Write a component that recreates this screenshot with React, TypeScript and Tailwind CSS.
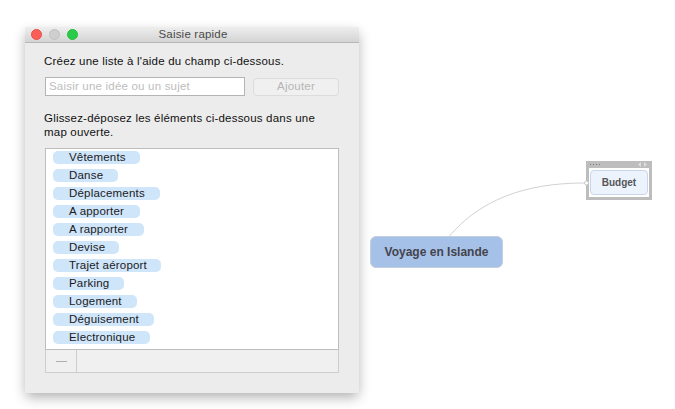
const items = [
  { label: "Vêtements", width: "w-[87px]" },
  { label: "Danse", width: "w-[65px]" },
  { label: "Déplacements", width: "w-[107px]" },
  { label: "A apporter", width: "w-[87px]" },
  { label: "A rapporter", width: "w-[91px]" },
  { label: "Devise", width: "w-[66px]" },
  { label: "Trajet aéroport", width: "w-[108px]" },
  { label: "Parking", width: "w-[71px]" },
  { label: "Logement", width: "w-[84px]" },
  { label: "Déguisement", width: "w-[101px]" },
  { label: "Electronique", width: "w-[97px]" },
];

function QuickEntryWindow() {
  return (
    <div className="absolute left-[25px] top-[27px] flex h-[366px] w-[334px] flex-col bg-[#ececec] shadow-[0_5px_12px_-1px_rgba(0,0,0,0.32)]">
      <div className="relative flex h-[16px] items-center justify-center border-b border-[#b8b8b8] bg-gradient-to-b from-[#eeeeee] to-[#d4d4d4] pl-[2px] text-[11.5px] tracking-[0.2px] text-[#4a4a4a]">
        <div className="absolute left-[6px] top-[2px] flex gap-[7px]">
          <span className="h-[11px] w-[11px] rounded-full border border-[#ea4c46] bg-[#fc5f5a]" />
          <span className="h-[11px] w-[11px] rounded-full border border-[#c2c2c2] bg-[#cfcfcf]" />
          <span className="h-[11px] w-[11px] rounded-full border border-[#24bd3e] bg-[#2acb48]" />
        </div>
        Saisie rapide
      </div>
      <div className="flex flex-1 flex-col px-[20px] pt-[11px]">
        <p className="-ml-px text-[11.5px] leading-[14px] tracking-[0.2px] text-[#111]">
          Créez une liste à l'aide du champ ci-dessous.
        </p>
        <div className="mt-[9px] flex items-center gap-[8px]">
          <div className="flex h-[19px] w-[200px] items-center border border-[#b4b4b4] bg-white px-[3px] text-[11.5px] tracking-[0.2px] text-[#bdbdbd]">
            Saisir une idée ou un sujet
          </div>
          <div className="flex h-[18px] w-[86px] items-center justify-center rounded-[4px] border border-[#dcdcdc] bg-[#f0f0f0] text-[11.5px] tracking-[0.2px] text-[#b5b5b5]">
            Ajouter
          </div>
        </div>
        <p className="-ml-px mt-[15px] w-[285px] text-[11.5px] leading-[14px] tracking-[0.2px] text-[#111]">
          Glissez-déposez les éléments ci-dessous dans une map ouverte.
        </p>
        <div className="mt-[9px] flex h-[202px] w-[294px] flex-col gap-[5px] border border-[#bdbdbd] bg-white pl-[7px] pt-[2px]">
          {items.map((item) => (
            <div
              key={item.label}
              className={`flex h-[13px] items-center rounded-[5px] bg-[#cfe5fa] pl-[16px] text-[11.5px] tracking-[0.2px] text-[#1a1a1a] ${item.width}`}
            >
              {item.label}
            </div>
          ))}
        </div>
        <div className="flex h-[23px] w-[294px] border-x border-b border-[#cdcdcd] bg-[#f0f0f0]">
          <div className="flex w-[31px] items-center justify-center border-r border-[#cdcdcd]">
            <span className="h-px w-[11px] bg-[#b0b0b0]" />
          </div>
        </div>
      </div>
    </div>
  );
}

function MapCanvas() {
  return (
    <>
      <div className="absolute left-[370px] top-[236px] flex h-[32px] w-[133px] items-center justify-center rounded-[6px] border border-[#c5cfdf] bg-[#a6c1e8] text-[12px] font-bold text-[#44444c]">
        Voyage en Islande
      </div>
      <div className="absolute left-[586px] top-[161px] flex h-[39px] w-[66px] flex-col bg-[#bdbdbd] px-[3px] pb-[3px]">
        <div className="flex h-[7px] items-center justify-between px-[1px]">
          <div className="flex gap-[2px]">
            <span className="h-px w-px bg-[#777]" />
            <span className="h-px w-px bg-[#777]" />
            <span className="h-px w-px bg-[#777]" />
            <span className="h-px w-px bg-[#777]" />
          </div>
          <svg width="9" height="5" viewBox="0 0 9 5" className="mr-[1px]">
            <path d="M3 0v5L0 2.5zM6 0v5l3-2.5z" fill="#dedede" />
          </svg>
        </div>
        <div className="flex flex-1 items-center justify-center bg-white px-px py-[2px]">
          <div className="flex h-full w-full items-center justify-center rounded-[4px] border border-[#c9d6ea] bg-[#edf3fd] text-[10px] font-bold text-[#55555a]">
            Budget
          </div>
        </div>
      </div>
      <svg className="absolute left-[440px] top-[175px]" width="150" height="65" viewBox="0 0 150 65" fill="none">
        <path d="M9.5 61 C 40 25, 85 8, 144 8" stroke="#d2d2d2" strokeWidth="1" />
        <circle cx="146.5" cy="8" r="2" fill="#fff" stroke="#c8c8c8" />
      </svg>
    </>
  );
}

export default function App() {
  return (
    <div className="relative h-[409px] w-[675px] overflow-hidden bg-white font-['Liberation_Sans',sans-serif]">
      <QuickEntryWindow />
      <MapCanvas />
    </div>
  );
}
